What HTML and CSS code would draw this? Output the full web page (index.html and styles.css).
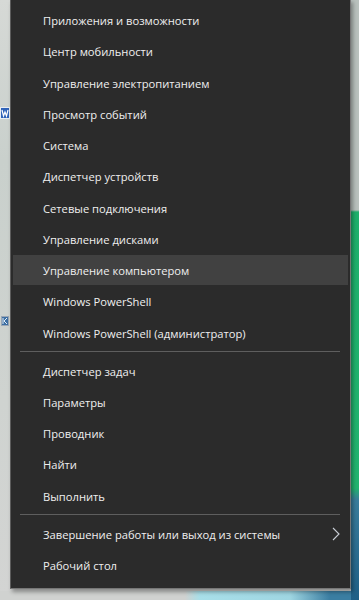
FILE: index.html
```html
<!DOCTYPE html>
<html lang="ru">
<head>
    <meta charset="UTF-8">
    <meta name="viewport" content="width=device-width, initial-scale=1.0">
    <title>Меню Win+X</title>
    <link rel="stylesheet" href="styles.css">
</head>
<body>
    <!-- desktop icons peeking out from behind the menu -->
    <svg class="desk-icon icon-w" width="10" height="12" viewBox="0 0 10 12">
        <rect x="0" y="0" width="10" height="12" fill="#e8eef3"/>
        <rect x="1" y="1" width="8" height="10" fill="#2f63b8"/>
        <path d="M2 3 L3.5 9 L5 5 L6.5 9 L8 3" stroke="#fff" stroke-width="1.2" fill="none"/>
    </svg>
    <svg class="desk-icon icon-k" width="8" height="10" viewBox="0 0 8 10">
        <rect x="0" y="0" width="8" height="10" fill="#9aa6b4"/>
        <rect x="1" y="1" width="6" height="8" fill="#3d6fa3"/>
        <path d="M2 2 L2 8 M6 2 L3 5 L6 8" stroke="#e6f0f8" stroke-width="1" fill="none"/>
    </svg>

    <div class="menu">
        <div class="group">
            <div class="item">Приложения и возможности</div>
            <div class="item">Центр мобильности</div>
            <div class="item">Управление электропитанием</div>
            <div class="item">Просмотр событий</div>
            <div class="item">Система</div>
            <div class="item">Диспетчер устройств</div>
            <div class="item">Сетевые подключения</div>
            <div class="item">Управление дисками</div>
            <div class="item active">Управление компьютером</div>
            <div class="item">Windows PowerShell</div>
            <div class="item">Windows PowerShell (администратор)</div>
        </div>
        <div class="separator"></div>
        <div class="group">
            <div class="item">Диспетчер задач</div>
            <div class="item">Параметры</div>
            <div class="item">Проводник</div>
            <div class="item">Найти</div>
            <div class="item">Выполнить</div>
        </div>
        <div class="separator"></div>
        <div class="group">
            <div class="item has-sub">
                <span>Завершение работы или выход из системы</span>
                <svg class="chevron" width="8" height="14" viewBox="0 0 8 14">
                    <polyline points="1,1 7,7 1,13" fill="none" stroke="#c9ced6" stroke-width="1.1"/>
                </svg>
            </div>
            <div class="item">Рабочий стол</div>
        </div>
    </div>
</body>
</html>
```

FILE: styles.css
```css
html, body {
    height: 100%;
}
body {
    margin: 0;
    overflow: hidden;
    position: relative;
    font-family: "Open Sans", "Noto Sans", sans-serif;
    background-color: #d4d7d4;
    background-image:
        linear-gradient(to bottom, #b9c1bd 0, #b9c1bd 210px, #1fb06c 212px, #22b46f 488px, #3a7d9c 500px, #1f5f86 600px),
        linear-gradient(to right, #d0d2d0 0, #d0d2d0 185px, #a8dfe9 200px, #9fd6e2 290px, #3b7ea2 330px),
        linear-gradient(to bottom, #d6d9d6 0, #c9d0cc 160px, #cfd3d0 400px, #d3d4d3 600px);
    background-repeat: no-repeat;
    background-position: right top, left bottom, left top;
    background-size: 8px 100%, 100% 9px, 100% 100%;
}
.desk-icon {
    position: absolute;
    left: 0;
}
.icon-w {
    top: 107px;
}
.icon-k {
    top: 316px;
    left: 1px;
}
.menu {
    position: relative;
    box-sizing: border-box;
    width: 341px;
    margin: -1px 0 0 10px;
    padding: 5px 0 7px;
    background: #2b2b2b;
    border: 1px solid #767676;
    border-left-color: #5c5c5c;
    box-shadow: 2px 3px 4px rgba(0, 0, 0, 0.35);
}
.item {
    display: flex;
    align-items: center;
    justify-content: space-between;
    height: 30px;
    margin: 0 2px 1.25px;
    padding: 1px 8px 0 30px;
    box-sizing: border-box;
    color: #efefef;
    font-size: 11.2px;
    white-space: nowrap;
}
.item.active {
    background: #414141;
}
.chevron {
    display: block;
}
.separator {
    height: 1px;
    margin: 3.5px 10px 3.5px 9px;
    background: #5e5e5e;
}
```
